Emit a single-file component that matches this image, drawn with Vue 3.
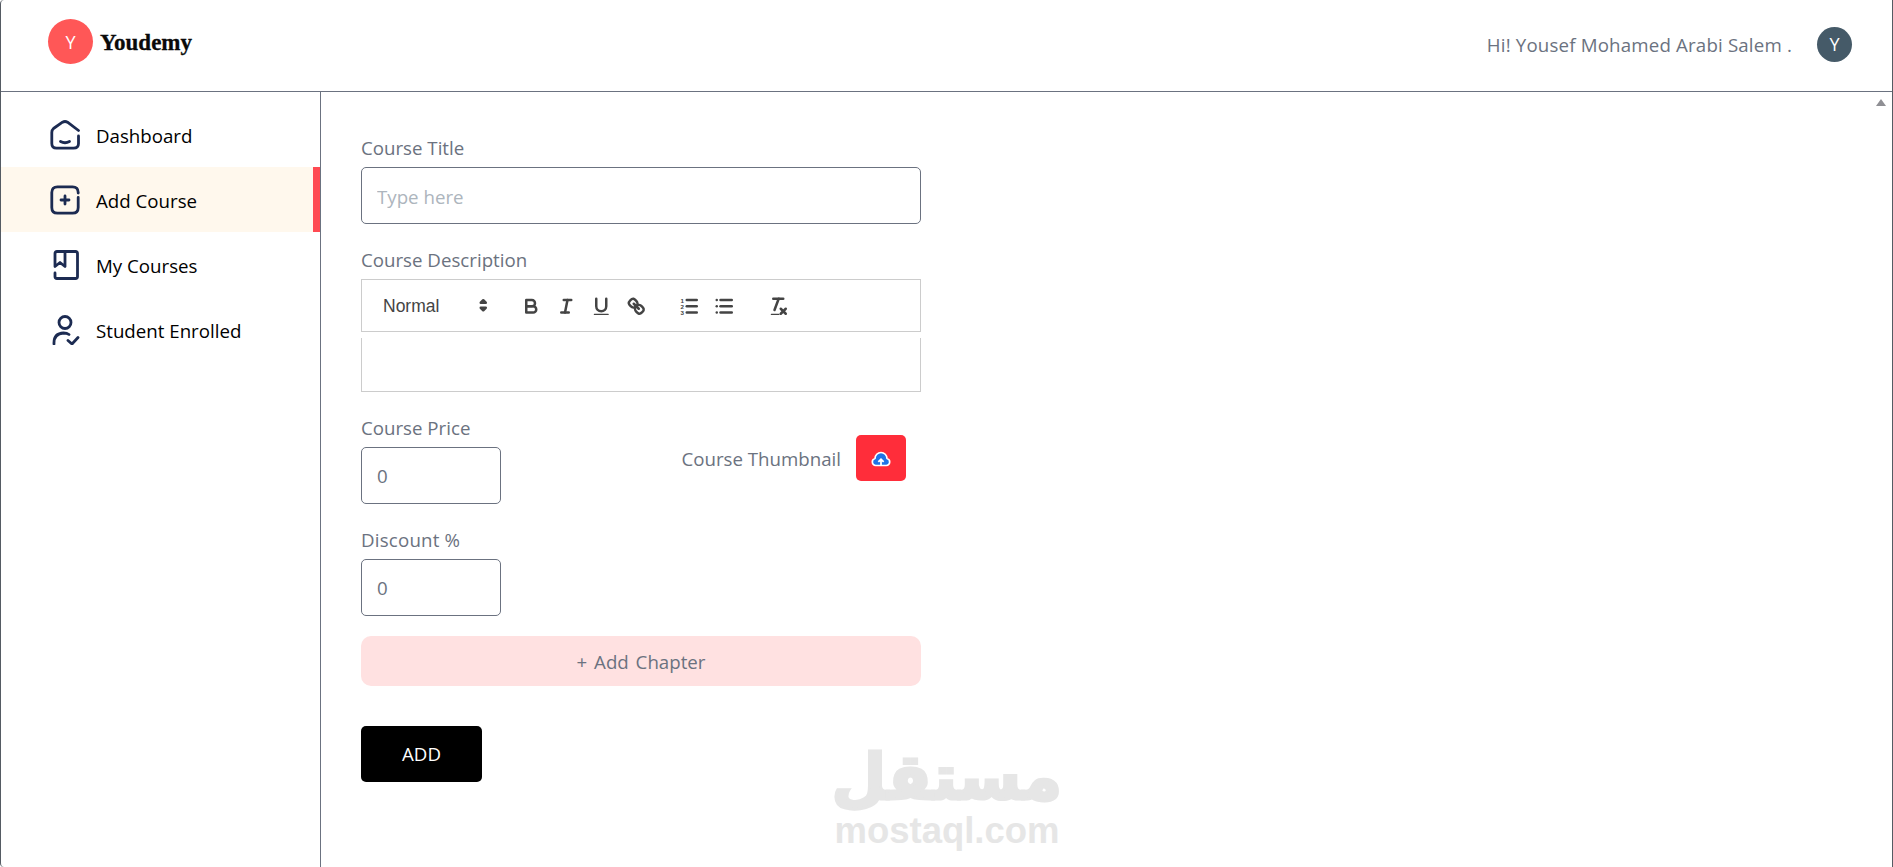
<template>
  <div class="app">
    <header class="topbar">
      <div class="brand">
        <div class="brand-mark">Y</div>
        <span class="brand-name">Youdemy</span>
      </div>
      <div class="user">
        <span class="greeting">Hi! Yousef Mohamed Arabi Salem .</span>
        <div class="avatar">Y</div>
      </div>
    </header>

    <div class="body">
      <aside class="sidebar">
        <a v-for="item in menu" :key="item.name" class="menu-item" :class="{ active: item.active }">
          <svg class="menu-icon" viewBox="0 0 30 30" fill="none" stroke="#1c2b52" stroke-width="2.8" stroke-linecap="round" stroke-linejoin="round">
            <path v-for="d in item.paths" :key="d" :d="d" />
            <circle v-if="item.head" cx="15" cy="7.5" r="6" />
          </svg>
          <span class="menu-label">{{ item.name }}</span>
        </a>
      </aside>

      <main class="content">
        <form class="course-form" @submit.prevent>
          <div class="field">
            <label>Course Title</label>
            <input class="title-input" type="text" placeholder="Type here" />
          </div>

          <div class="field">
            <label>Course Description</label>
            <div class="editor">
              <div class="toolbar">
                <span class="picker">
                  Normal
                  <svg viewBox="0 0 18 18"><polygon class="stroke" points="7 11 9 13 11 11 7 11" /><polygon class="stroke" points="7 7 9 5 11 7 7 7" /></svg>
                </span>
                <span class="group">
                  <button type="button"><svg viewBox="0 0 18 18"><path class="stroke" d="M5,4H9.5A2.5,2.5,0,0,1,12,6.5v0A2.5,2.5,0,0,1,9.5,9H5A0,0,0,0,1,5,9V4A0,0,0,0,1,5,4Z" /><path class="stroke" d="M5,9h5.5A2.5,2.5,0,0,1,13,11.5v0A2.5,2.5,0,0,1,10.5,14H5a0,0,0,0,1,0,0V9A0,0,0,0,1,5,9Z" /></svg></button>
                  <button type="button"><svg viewBox="0 0 18 18"><line class="stroke" x1="7" x2="13" y1="4" y2="4" /><line class="stroke" x1="5" x2="11" y1="14" y2="14" /><line class="stroke" x1="8" x2="10" y1="14" y2="4" /></svg></button>
                  <button type="button"><svg viewBox="0 0 18 18"><path class="stroke" d="M5,3V9a4,4,0,0,0,4,4H9a4,4,0,0,0,4-4V3" /><rect class="fill" x="3" y="15" width="12" height="1" rx="0.5" /></svg></button>
                  <button type="button"><svg viewBox="0 0 18 18"><line class="stroke" x1="7" x2="11" y1="7" y2="11" /><path class="stroke" d="M8.9,4.577a3.476,3.476,0,0,1,.36,4.679A3.476,3.476,0,0,1,4.577,8.9C3.185,7.5,2.035,6.4,4.217,4.217,6.4,2.035,7.5,3.185,8.9,4.577Z" /><path class="stroke" d="M13.423,9.1a3.476,3.476,0,0,0-4.679-.36,3.476,3.476,0,0,0,.36,4.679c1.392,1.392,2.5,2.542,4.679.36S14.815,10.5,13.423,9.1Z" /></svg></button>
                </span>
                <span class="group">
                  <button type="button"><svg viewBox="0 0 18 18"><line class="stroke" x1="7" x2="15" y1="4" y2="4" /><line class="stroke" x1="7" x2="15" y1="9" y2="9" /><line class="stroke" x1="7" x2="15" y1="14" y2="14" /><text class="num" x="2" y="6">1</text><text class="num" x="2" y="11">2</text><text class="num" x="2" y="16">3</text></svg></button>
                  <button type="button"><svg viewBox="0 0 18 18"><line class="stroke" x1="6" x2="15" y1="4" y2="4" /><line class="stroke" x1="6" x2="15" y1="9" y2="9" /><line class="stroke" x1="6" x2="15" y1="14" y2="14" /><line class="stroke" x1="3" x2="3" y1="4" y2="4" /><line class="stroke" x1="3" x2="3" y1="9" y2="9" /><line class="stroke" x1="3" x2="3" y1="14" y2="14" /></svg></button>
                </span>
                <span class="group">
                  <button type="button"><svg viewBox="0 0 18 18"><line class="stroke" x1="5" x2="13" y1="3" y2="3" /><line class="stroke" x1="6" x2="9.35" y1="12" y2="3" /><line class="stroke" x1="11" x2="15" y1="11" y2="15" /><line class="stroke" x1="15" x2="11" y1="11" y2="15" /><rect class="fill" x="3" y="15" width="7" height="1" rx="0.5" /></svg></button>
                </span>
              </div>
              <div class="editor-area"></div>
            </div>
          </div>

          <div class="price-row">
            <div class="field">
              <label>Course Price</label>
              <input class="short" type="number" value="0" />
            </div>
            <div class="thumbnail">
              <span class="thumb-label">Course Thumbnail</span>
              <button type="button" class="upload">
                <svg viewBox="0 0 18 15" width="20" height="17">
                  <path d="M5 13.8H4.2a3.2 3.2 0 0 1-.6-6.3 5.4 5.4 0 0 1 10.8 0 3.2 3.2 0 0 1-.6 6.3Z" fill="#1d74e7" stroke="#fff" stroke-width="1.5" stroke-linejoin="round" />
                  <path d="M9 14V9M6.6 10.6 9 8.2l2.4 2.4" fill="none" stroke="#fff" stroke-width="1.6" />
                </svg>
              </button>
            </div>
          </div>

          <div class="field">
            <label class="discount">Discount %</label>
            <input class="short" type="number" value="0" />
          </div>

          <button type="button" class="add-chapter">+ Add Chapter</button>
          <button type="submit" class="add-btn">ADD</button>
        </form>
        <div class="scroll-up"></div>
      </main>
    </div>

    <div class="watermark">
      <div class="wm-ar" lang="ar" dir="rtl">مستقل</div>
      <div class="wm-en">mostaql.com</div>
    </div>
  </div>
</template>

<script setup>
const menu = [
  {
    name: "Dashboard",
    paths: [
      "M28.5 10.5 17.5 2.2Q15 .8 12.5 2.2L3.5 8.5Q1.8 10 1.8 12.5V23.5Q1.8 28.2 6.5 28.2H23.5Q28.5 28.2 28.5 23.5V16",
      "M10.5 21.5Q15 24 19.5 21.5",
    ],
  },
  {
    name: "Add Course",
    active: true,
    paths: [
      "M28.2 8V7.5Q28.2 1.8 22.5 1.8H7.5Q1.8 1.8 1.8 7.5V22.5Q1.8 28.2 7.5 28.2H22.5Q28.2 28.2 28.2 22.5V12.5",
      "M15 11V19M11 15H19",
    ],
  },
  {
    name: "My Courses",
    paths: [
      "M5 23V26.5Q5 28.5 7 28.5H25.5Q27.5 28.5 27.5 26.5V3.5Q27.5 1.5 25.5 1.5H7Q5 1.5 5 3.5V16.5L10 12.5 15 16.5V1.5",
    ],
  },
  {
    name: "Student Enrolled",
    head: true,
    paths: ["M4 29Q3.5 18.5 13.5 18Q17 18 19 19.5", "M18 25.5 22 29 28 22.5"],
  },
]
</script>

<style>
html,
body {
  margin: 0;
  background: #fff;
}
</style>

<style scoped>
.app {
  position: relative;
  box-sizing: border-box;
  height: 867px;
  display: flex;
  flex-direction: column;
  overflow: hidden;
  border-left: 1px solid #555b63;
  border-right: 1px solid #555b63;
  border-radius: 4px 0 0 4px;
  font-family: "Open Sans", "Noto Sans", sans-serif;
  font-size: 18.7px;
  line-height: 30px;
  color: #6b7280;
}

.topbar {
  height: 91px;
  flex: none;
  display: flex;
  align-items: center;
  justify-content: space-between;
  padding: 0 40px 0 47px;
  border-bottom: 1px solid #6b7280;
}

.brand {
  display: flex;
  align-items: center;
  gap: 7px;
  margin-bottom: 8px;
}

.brand-mark {
  width: 45px;
  height: 45px;
  border-radius: 50%;
  background: #ff5757;
  color: #fff;
  font-size: 18px;
  display: flex;
  align-items: center;
  justify-content: center;
}

.brand-name {
  padding-top: 3px;
  font-family: "Liberation Serif", serif;
  font-weight: 700;
  font-size: 23px;
  color: #0a0a0a;
  -webkit-text-stroke: 0.3px #0a0a0a;
}

.user {
  display: flex;
  align-items: center;
  gap: 25px;
  margin-bottom: 3px;
}

.greeting {
  padding-top: 2px;
  letter-spacing: 0.17px;
}

.avatar {
  width: 35px;
  height: 35px;
  border-radius: 50%;
  background: #455a68;
  color: #fff;
  font-size: 18px;
  display: flex;
  align-items: center;
  justify-content: center;
}

.body {
  flex: 1;
  display: flex;
  min-height: 0;
}

.sidebar {
  width: 320px;
  flex: none;
  box-sizing: border-box;
  padding-top: 10px;
  border-right: 1px solid #6b7280;
}

.menu-item {
  height: 65px;
  box-sizing: border-box;
  display: flex;
  align-items: center;
  gap: 16px;
  padding-left: 49px;
  color: #000;
}

.menu-item.active {
  background: #fff8ed;
  border-right: 7px solid #ff4a52;
}

.menu-icon {
  width: 30px;
  height: 30px;
  flex: none;
}

.menu-label {
  padding-top: 2px;
}

.content {
  position: relative;
  flex: 1;
  padding: 40px;
}

.course-form {
  width: 560px;
  display: flex;
  flex-direction: column;
  gap: 20px;
}

.field {
  display: flex;
  flex-direction: column;
  gap: 5px;
}

label {
  height: 30px;
  line-height: 32px;
}

.discount {
  letter-spacing: 0.2px;
}

input {
  box-sizing: border-box;
  width: 100%;
  height: 57px;
  padding: 0 15px;
  border: 1px solid #6b7280;
  border-radius: 5px;
  outline: none;
  font: inherit;
  color: #6b7280;
  background: #fff;
  appearance: textfield;
}

input.title-input {
  padding-top: 2px;
}

input::placeholder {
  color: #adb5bd;
}

input.short {
  width: 140px;
}

.editor {
  display: flex;
  flex-direction: column;
}

.toolbar {
  height: 53px;
  box-sizing: border-box;
  display: flex;
  align-items: center;
  padding: 0 10px;
  border: 1px solid #ccc;
  font-family: "Liberation Sans", Arial, sans-serif;
  font-size: 17.5px;
  color: #444;
}

.picker {
  position: relative;
  width: 122.5px;
  height: 30px;
  box-sizing: border-box;
  padding-left: 11px;
  display: flex;
  align-items: center;
  flex: none;
}

.picker svg {
  position: absolute;
  right: 0;
  top: 3.75px;
  width: 22.5px;
  height: 22.5px;
}

.group {
  display: flex;
  margin-left: 18.75px;
  margin-top: 2px;
  flex: none;
}

.group button {
  width: 35px;
  height: 30px;
  padding: 3.75px 6.25px;
  border: 0;
  background: none;
  display: block;
}

.group svg {
  display: block;
  width: 22.5px;
  height: 22.5px;
}

.stroke {
  fill: none;
  stroke: #444;
  stroke-width: 2;
  stroke-linecap: round;
  stroke-linejoin: round;
}

.fill {
  fill: #444;
}

.num {
  font-size: 5px;
  font-weight: 700;
  fill: #444;
  font-family: "Liberation Sans", sans-serif;
}

.editor-area {
  height: 53px;
  margin-top: 6px;
  border: 1px solid #ccc;
  border-top: 0;
}

.price-row {
  display: flex;
  align-items: center;
  justify-content: space-between;
  padding-right: 15px;
}

.thumbnail {
  display: flex;
  align-items: center;
  gap: 15px;
}

.thumb-label {
  padding-top: 2px;
}

.upload {
  width: 50px;
  height: 46px;
  padding: 0;
  border: 0;
  border-radius: 5px;
  background: #ff2d3a;
  display: flex;
  align-items: center;
  justify-content: center;
}

.add-chapter {
  height: 50px;
  padding-top: 2px;
  border: 0;
  border-radius: 10px;
  background: #ffe1e1;
  font: inherit;
  word-spacing: 2px;
  color: #6b7280;
}

.add-btn {
  width: 121px;
  height: 56px;
  margin-top: 20px;
  border: 0;
  border-radius: 5px;
  background: #000;
  color: #fff;
  font: inherit;
}

.scroll-up {
  position: absolute;
  top: 7px;
  right: 6px;
  width: 0;
  height: 0;
  border-left: 5px solid transparent;
  border-right: 5px solid transparent;
  border-bottom: 7px solid #8f8f94;
}

.watermark {
  position: absolute;
  left: 831px;
  top: 730px;
  width: 230px;
  text-align: center;
  color: #e6e6e6;
  pointer-events: none;
}

.wm-ar {
  font-family: "DejaVu Sans", sans-serif;
  font-weight: 700;
  font-size: 63px;
  line-height: 96px;
  margin-bottom: -13px;
  white-space: nowrap;
  -webkit-text-stroke: 3px #e6e6e6;
}

.wm-en {
  font-family: "Liberation Sans", sans-serif;
  font-weight: 700;
  font-size: 36.5px;
  line-height: 36px;
  white-space: nowrap;
}
</style>
